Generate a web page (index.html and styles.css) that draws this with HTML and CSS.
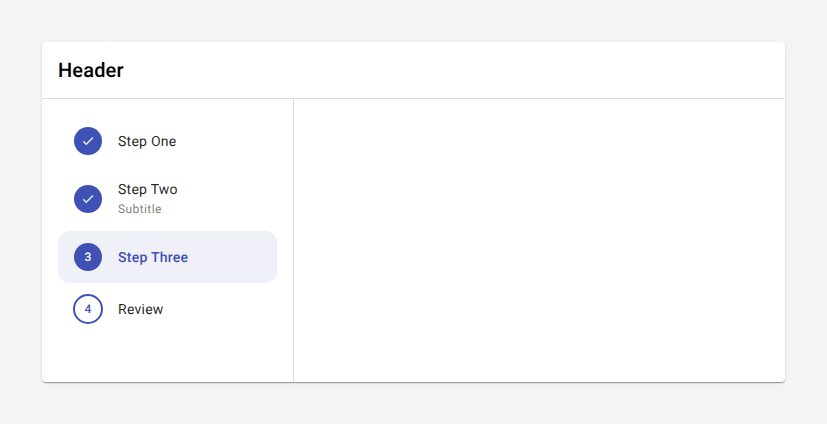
FILE: index.html
```html
<!DOCTYPE html>
<html lang="en">
<head>
<meta charset="utf-8">
<title>Stepper</title>
<link rel="stylesheet" href="styles.css">
</head>
<body>
<main class="card">
  <header class="card-header"><h1>Header</h1></header>
  <div class="card-body">
    <ol class="steps">
      <li class="step">
        <span class="marker"><svg class="check" viewBox="0 0 24 24"><path d="M9 16.2 4.8 12l-1.4 1.4L9 19 21 7l-1.4-1.4z"/></svg></span>
        <span class="label">Step One</span>
      </li>
      <li class="step step-tall">
        <span class="marker"><svg class="check" viewBox="0 0 24 24"><path d="M9 16.2 4.8 12l-1.4 1.4L9 19 21 7l-1.4-1.4z"/></svg></span>
        <span class="label">Step Two<small class="subtitle">Subtitle</small></span>
      </li>
      <li class="step step-active">
        <span class="marker">3</span>
        <span class="label">Step Three</span>
      </li>
      <li class="step">
        <span class="marker marker-outline">4</span>
        <span class="label">Review</span>
      </li>
    </ol>
    <section class="content"></section>
  </div>
</main>
</body>
</html>
```
FILE: styles.css
```css
* { box-sizing: border-box; }
body {
  margin: 0;
  padding: 42px;
  background: #f4f4f4;
  color: rgba(0, 0, 0, 0.87);
  font-family: Roboto, sans-serif;
  text-rendering: geometricPrecision;
}
.card {
  display: flex;
  flex-direction: column;
  height: 340px;
  background: #fff;
  border-radius: 4px;
  box-shadow: 0 2px 1px -1px rgba(0, 0, 0, 0.2), 0 1px 1px rgba(0, 0, 0, 0.14), 0 1px 3px rgba(0, 0, 0, 0.12);
}
.card-header {
  display: flex;
  align-items: center;
  height: 57px;
  padding: 0 16px;
  border-bottom: 1px solid #dedede;
}
h1 {
  margin: 0;
  color: #000;
  font-size: 20px;
  font-weight: 500;
  line-height: 32px;
  letter-spacing: 0.15px;
}
.card-body { display: flex; flex: 1; }
.steps {
  width: 252px;
  margin: 0;
  padding: 16px;
  border-right: 1px solid #dedede;
  list-style: none;
}
.step {
  display: flex;
  align-items: center;
  gap: 16px;
  height: 52px;
  padding: 0 16px;
  border-radius: 12px;
}
.step-tall { height: 64px; }
.step-active { background: #f0f0f9; }
.marker {
  display: flex;
  align-items: center;
  justify-content: center;
  width: 28px;
  height: 28px;
  border-radius: 50%;
  background: #3f51b5;
  color: #fff;
  font-size: 12px;
  font-weight: 500;
}
.marker-outline {
  width: 30px;
  height: 30px;
  margin: 0 -1px;
  border: 2px solid #3f51b5;
  background: #fff;
  color: #3f51b5;
}
.check {
  width: 14px;
  height: 14px;
  fill: #fff;
  stroke: #fff;
  stroke-width: 0.4;
}
.label {
  padding-top: 2px;
  font-size: 14px;
  line-height: 20px;
  letter-spacing: 0.25px;
}
.step-active .label { color: #3f51b5; font-weight: 500; }
.subtitle {
  display: block;
  margin: -1px 0 1px;
  color: rgba(0, 0, 0, 0.54);
  font-size: 12px;
  letter-spacing: 0.4px;
}
.content { flex: 1; }
```
